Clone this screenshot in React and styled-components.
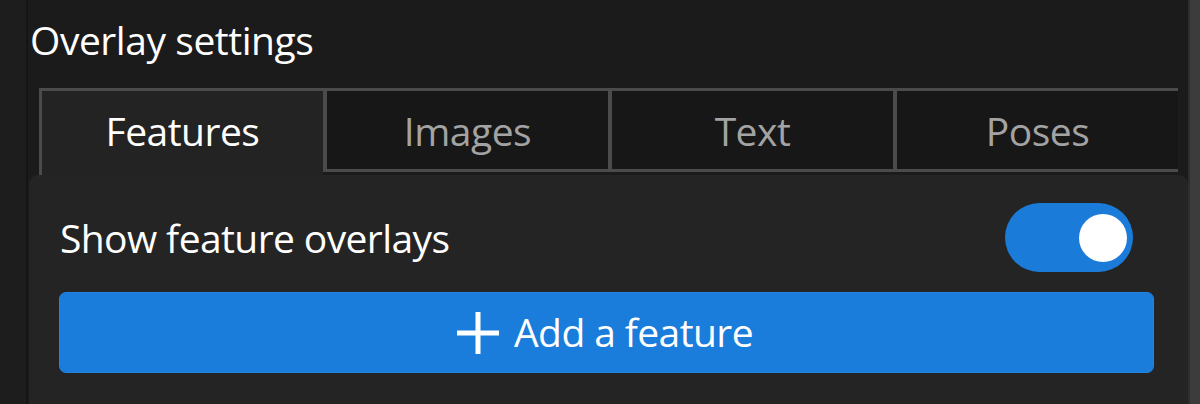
import React, { useState } from "react";
import styled, { createGlobalStyle } from "styled-components";

const GlobalStyle = createGlobalStyle`
  html, body { margin: 0; padding: 0; background: #1b1b1b; }
  body { font-family: "Open Sans", "Noto Sans", "Liberation Sans", sans-serif; }
  * { box-sizing: border-box; }
`;

const Window = styled.div`
  width: 1200px;
  height: 404px;
  display: flex;
  background: #1b1b1b;
  overflow: hidden;
`;

const SidePane = styled.div`
  width: 28px;
  flex: none;
  background: #1d1d1d;
  border-right: 2px solid #151515;
`;

const Main = styled.div`
  flex: 1;
  display: flex;
  flex-direction: column;
  padding-left: 1px;
  min-width: 0;
`;

const Title = styled.div`
  height: 88px;
  flex: none;
  padding: 14px 0 0 1px;
  color: #ffffff;
  font-size: 39px;
  line-height: 52px;
  letter-spacing: -0.45px;
`;

const TabList = styled.div`
  height: 87px;
  flex: none;
  display: flex;
  align-items: flex-start;
  margin: 0 10px;
`;

const Tab = styled.button`
  flex: 1;
  height: ${(p) => (p.$active ? "87px" : "84px")};
  margin: 0;
  padding: 0 0 ${(p) => (p.$active ? "6px" : "0")};
  display: flex;
  align-items: center;
  justify-content: center;
  background: ${(p) => (p.$active ? "#232323" : "#171717")};
  color: ${(p) => (p.$active ? "#ffffff" : "#a3a3a3")};
  font-family: inherit;
  font-size: 39px;
  letter-spacing: -0.5px;
  border: none;
  border-top: 3px solid #4b4b4b;
  border-left: ${(p) => (p.$first ? "3px" : "4px")} solid #4b4b4b;
  border-bottom: ${(p) => (p.$active ? "none" : "3px solid #4b4b4b")};
  cursor: pointer;
`;

const Panel = styled.div`
  flex: 1;
  background: #242424;
  border-radius: 9px 9px 0 0;
  padding: 28px 34px 0 30px;
  display: flex;
  flex-direction: column;
  gap: 20px;
`;

const SettingRow = styled.div`
  height: 69px;
  display: flex;
  align-items: center;
  justify-content: space-between;
  padding: 0 21px 0 1px;
`;

const Label = styled.span`
  color: #ffffff;
  font-size: 39px;
  letter-spacing: -0.6px;
`;

const Switch = styled.button`
  width: 128px;
  height: 69px;
  border-radius: 35px;
  border: none;
  padding: 0 6px 0 0;
  display: flex;
  align-items: center;
  justify-content: ${(p) => (p.$on ? "flex-end" : "flex-start")};
  background: ${(p) => (p.$on ? "#1a7bd9" : "#555")};
  cursor: pointer;
`;

const Knob = styled.span`
  width: 48px;
  height: 48px;
  border-radius: 50%;
  background: #ffffff;
`;

const AddButton = styled.button`
  height: 81px;
  width: 100%;
  border-radius: 7px;
  border: 1px solid #2384e0;
  background: #1a7cdb;
  color: #ffffff;
  display: flex;
  align-items: center;
  justify-content: center;
  gap: 14px;
  font-family: inherit;
  font-size: 39px;
  letter-spacing: -0.6px;
  padding: 0 4px 0 0;
  cursor: pointer;
`;

const ButtonText = styled.span`
  line-height: 1;
  padding-bottom: 3px;
`;

const ScrollTrack = styled.div`
  width: 12px;
  flex: none;
  background: #3c3c3c;
  border-left: 2px solid #2e2e2e;
`;

const PlusIcon = () => (
  <svg width="44" height="44" viewBox="0 0 44 44" aria-hidden="true">
    <path d="M22 1v42M1 22h42" stroke="#ffffff" strokeWidth="5" fill="none" />
  </svg>
);

const tabs = ["Features", "Images", "Text", "Poses"];

export default function App() {
  const [active, setActive] = useState(0);
  const [on, setOn] = useState(true);
  return (
    <>
      <GlobalStyle />
      <Window>
        <SidePane />
        <Main>
          <Title>Overlay settings</Title>
          <TabList>
            {tabs.map((t, i) => (
              <Tab
                key={t}
                $active={i === active}
                $first={i === 0}
                onClick={() => setActive(i)}
              >
                {t}
              </Tab>
            ))}
          </TabList>
          <Panel>
            <SettingRow>
              <Label>Show feature overlays</Label>
              <Switch $on={on} onClick={() => setOn(!on)}>
                <Knob />
              </Switch>
            </SettingRow>
            <AddButton>
              <PlusIcon />
              <ButtonText>Add a feature</ButtonText>
            </AddButton>
          </Panel>
        </Main>
        <ScrollTrack />
      </Window>
    </>
  );
}
